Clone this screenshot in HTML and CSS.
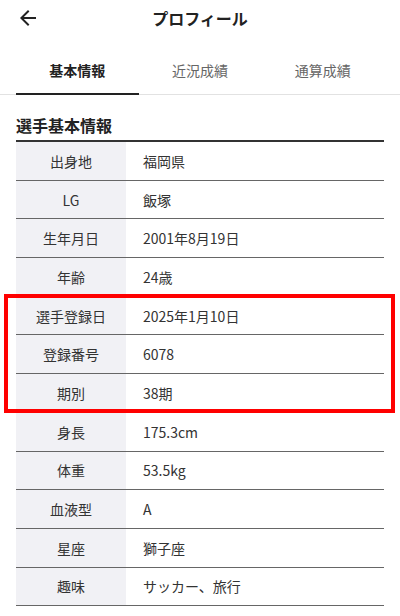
FILE: index.html
```html
<!DOCTYPE html>
<html lang="ja">
<head>
  <meta charset="UTF-8">
  <meta name="viewport" content="width=device-width, initial-scale=1.0">
  <title>プロフィール</title>
  <link rel="stylesheet" href="styles.css">
</head>
<body>
  <header class="app-bar">
    <svg class="back" viewBox="0 0 24 24" width="24" height="24"><path d="M20 11H7.83l5.59-5.59L12 4l-8 8 8 8 1.41-1.41L7.83 13H20v-2z"/></svg>
    <h1>プロフィール</h1>
    <span></span>
  </header>

  <nav class="tabs">
    <div class="tab active">基本情報</div>
    <div class="tab">近況成績</div>
    <div class="tab">通算成績</div>
  </nav>

  <section class="info">
    <h2>選手基本情報</h2>
    <div class="table">
      <div class="row"><div class="label">出身地</div><div class="value">福岡県</div></div>
      <div class="row"><div class="label">LG</div><div class="value">飯塚</div></div>
      <div class="row"><div class="label">生年月日</div><div class="value">2001年8月19日</div></div>
      <div class="row"><div class="label">年齢</div><div class="value">24歳</div></div>
      <div class="marked">
        <div class="row"><div class="label">選手登録日</div><div class="value">2025年1月10日</div></div>
        <div class="row"><div class="label">登録番号</div><div class="value">6078</div></div>
        <div class="row"><div class="label">期別</div><div class="value">38期</div></div>
      </div>
      <div class="row"><div class="label">身長</div><div class="value">175.3cm</div></div>
      <div class="row"><div class="label">体重</div><div class="value">53.5kg</div></div>
      <div class="row"><div class="label">血液型</div><div class="value">A</div></div>
      <div class="row"><div class="label">星座</div><div class="value">獅子座</div></div>
      <div class="row"><div class="label">趣味</div><div class="value">サッカー、旅行</div></div>
    </div>
  </section>
</body>
</html>
```

FILE: styles.css
```css
body {
  font-family: 'Noto Sans CJK JP', 'Noto Sans', sans-serif;
  margin: 0;
  background: #fff;
  color: #333;
  overflow: hidden;
}
.app-bar {
  display: grid;
  grid-template-columns: 24px 1fr 24px;
  align-items: center;
  height: 36px;
  padding: 0 16px;
}
.back {
  fill: #222;
}
.app-bar h1 {
  margin: 0;
  font-size: 16px;
  font-weight: bold;
  text-align: center;
  color: #222;
}
.tabs {
  display: grid;
  grid-template-columns: repeat(3, 1fr);
  margin-top: 10px;
  padding: 0 16px;
  border-bottom: 1px solid #e2e2e2;
}
.tab {
  height: 49px;
  box-sizing: border-box;
  display: flex;
  align-items: center;
  justify-content: center;
  font-size: 14px;
  color: #666;
  border-bottom: 2px solid transparent;
  margin-bottom: -1px;
}
.tab.active {
  color: #222;
  font-weight: bold;
  border-bottom-color: #222;
}
.info {
  padding: 0 16px;
}
.info h2 {
  margin: 18px 0 3px;
  font-size: 16px;
  line-height: 24px;
  font-weight: bold;
  color: #222;
}
.table {
  border-top: 2px solid #333;
}
.row {
  display: flex;
  height: 38.7px;
  box-sizing: border-box;
  border-bottom: 1px solid #666;
  font-size: 14px;
}
.label {
  width: 110px;
  flex-shrink: 0;
  background: #f1f1f5;
  display: flex;
  align-items: center;
  justify-content: center;
}
.value {
  display: flex;
  align-items: center;
  padding-left: 17px;
}
.marked {
  position: relative;
}
.marked::after {
  content: '';
  position: absolute;
  top: -3px;
  bottom: 0;
  left: -12px;
  right: -11px;
  border: 4px solid #f00;
  pointer-events: none;
}
```
